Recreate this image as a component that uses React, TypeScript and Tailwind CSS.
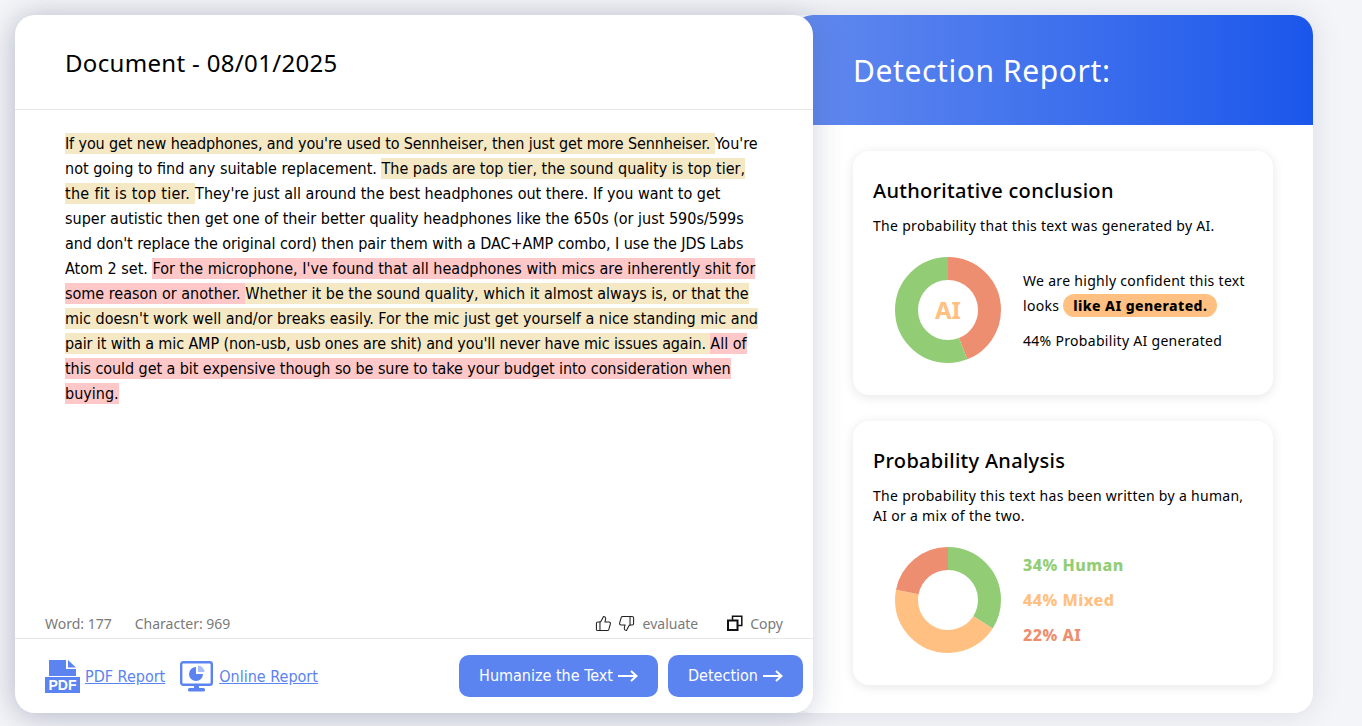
import { ThumbsDown, ThumbsUp } from "lucide-react";

const NOTO = "font-['Noto_Sans',sans-serif]";
const BODY = "font-['DejaVu_Sans',sans-serif] font-stretch-condensed";
const Y = "bg-[#f5e8c5] py-[1px]";
const R = "bg-[#ffc8c8] py-[1px]";

function Arrow() {
  return (
    <svg width="20" height="12" viewBox="0 0 20 12" fill="none" stroke="white" strokeWidth="2">
      <path d="M0 6h18.5M13 1l5.5 5-5.5 5" />
    </svg>
  );
}

function PdfIcon() {
  return (
    <svg width="35" height="33" viewBox="0 0 35 33">
      <path d="M4 0h17v9h10v7H4z" fill="#5b84f1" />
      <path d="M23 0l8 7.5h-8z" fill="#5b84f1" />
      <rect x="0" y="17" width="35" height="16" fill="#5b84f1" />
      <text x="17.5" y="30" textAnchor="middle" fill="white" fontSize="14" fontWeight="700" fontFamily="Liberation Sans, sans-serif">
        PDF
      </text>
    </svg>
  );
}

function ScreenIcon() {
  return (
    <svg width="33" height="31" viewBox="0 0 33 31">
      <rect x="1.2" y="1.2" width="30.6" height="22.6" rx="2" fill="none" stroke="#5b84f1" strokeWidth="2.4" />
      <path d="M16 6a7 7 0 1 0 7 7h-7z" fill="#5b84f1" />
      <path d="M18 4.5a7 7 0 0 1 6.5 6.5H18z" fill="#a9bef6" />
      <path d="M14 24h5v3h-5z" fill="#5b84f1" />
      <rect x="8" y="27" width="17" height="3.5" rx="1.5" fill="#5b84f1" />
    </svg>
  );
}

function CopyIcon() {
  return (
    <svg width="16" height="16" viewBox="0 0 16 16" fill="none" stroke="#111" strokeWidth="1.5">
      <rect x="1" y="5.5" width="9.5" height="9.5" strokeWidth="2" />
      <path d="M5.5 5V1.2h9.3v9.3H11" />
    </svg>
  );
}

function Donut({ parts }: { parts: { value: number; color: string }[] }) {
  const r = 41.5;
  const c = 2 * Math.PI * r;
  let offset = 0;
  return (
    <svg width="106" height="106" viewBox="0 0 106 106" className="shrink-0 -rotate-90">
      {parts.map((p) => {
        const dash = (p.value / 100) * c;
        const el = (
          <circle
            key={p.color}
            cx="53"
            cy="53"
            r={r}
            fill="none"
            stroke={p.color}
            strokeWidth="23"
            strokeDasharray={`${dash} ${c - dash}`}
            strokeDashoffset={-offset}
          />
        );
        offset += dash;
        return el;
      })}
    </svg>
  );
}

export default function App() {
  return (
    <div className="h-[726px] w-full overflow-hidden bg-[#f4f5f8] p-[15px]">
      <div className="flex h-[698px] w-[1298px] rounded-[20px] shadow-[0_0_30px_rgba(70,80,120,0.14)]">
        <div className="relative z-10 flex w-[798px] shrink-0 flex-col rounded-[20px] bg-white shadow-[0_4px_30px_rgba(70,80,120,0.26)]">
          <div className={`flex h-[95px] items-center border-b border-[#e5e7eb] px-[50px] pt-[2px] text-[24px] font-[450] tracking-[0.33px] text-black ${NOTO}`}>
            Document - 08/01/2025
          </div>
          <div className={`flex-1 pl-[50px] pr-[52px] pt-[21px] text-[16px] leading-[25px] text-black ${BODY}`}>
            <span className={`${Y} tracking-[-0.12px]`}>If you get new headphones, and you're used to Sennheiser, then just get more Sennheiser. </span>
            You're not going to find any suitable replacement.{" "}
            <span className={Y}>The pads are top tier, the sound quality is top tier, <span className="tracking-[0.3px]">the fit is top tier. </span></span>
            They're just all around the best headphones out there. If you want to get super autistic then get one of their better quality headphones like the 650s (or just 590s/599s <span className="tracking-[-0.07px]">and don't replace the original cord) then pair them with a DAC+AMP combo, I use the JDS Labs</span> Atom 2 set.{" "}
            <span className={R}>For the microphone, I've found that all headphones with mics are inherently shit for some reason or another. </span>
            <span className={Y}>Whether it be the sound quality, which it almost always is, or that the mic doesn't work well and/or breaks easily. For the mic just get yourself a nice standing mic and <span className="tracking-[-0.12px]">pair it with a mic AMP (non-usb, usb ones are shit) and you'll never have mic issues again. </span></span>
            <span className={R}>All of <span className="tracking-[-0.07px]">this could get a bit expensive though so be sure to take your budget into consideration when</span> buying.</span>
          </div>
          <div className={`flex h-[29px] items-center justify-between px-[30px] pb-[1px] text-[14px] text-[#7a7a7a] ${NOTO}`}>
            <div className="flex gap-[23px]">
              <span>Word: 177</span>
              <span>Character: 969</span>
            </div>
            <div className="flex items-center">
              <ThumbsUp size={17} strokeWidth={1.5} color="#222" />
              <ThumbsDown size={17} strokeWidth={1.5} color="#222" className="ml-[6px]" />
              <span className="ml-[8px]">evaluate</span>
              <span className="ml-[29px]"><CopyIcon /></span>
              <span className="ml-[7px]">Copy</span>
            </div>
          </div>
          <div className={`flex h-[75px] items-center justify-between border-t border-[#e5e7eb] pl-[30px] pr-[10px] text-[16px] ${BODY}`}>
            <div className="flex items-center text-[#5b84f1]">
              <PdfIcon />
              <span className="ml-[5px] mt-[1px] underline">PDF Report</span>
              <span className="ml-[15px]"><ScreenIcon /></span>
              <span className="ml-[6px] mt-[1px] underline">Online Report</span>
            </div>
            <div className="flex gap-[10px] text-white">
              <button className="flex h-[42px] w-[199px] items-center justify-center gap-[5px] rounded-[10px] bg-[#5b84f1]">
                Humanize the Text <Arrow />
              </button>
              <button className="flex h-[42px] w-[135px] items-center justify-center gap-[5px] rounded-[10px] bg-[#5b84f1]">
                Detection <Arrow />
              </button>
            </div>
          </div>
        </div>

        <div className={`-ml-[20px] flex w-[520px] shrink-0 flex-col rounded-[20px] bg-white ${NOTO}`}>
          <div className="flex h-[110px] shrink-0 items-center rounded-t-[20px] bg-gradient-to-r from-[#6289ee] to-[#1a56eb] pl-[60px] text-[30px] tracking-[0.6px] text-white">
            Detection Report:
          </div>
          <div className="flex flex-col gap-[26px] pl-[60px] pt-[26px]">
            <div className="h-[244px] w-[420px] rounded-[16px] bg-white px-[20px] pt-[26px] text-black shadow-[0_2px_12px_rgba(0,0,0,0.1)]">
              <h2 className="text-[20px] font-medium leading-[28px] tracking-[0.3px]">Authoritative conclusion</h2>
              <p className="mt-[10px] text-[14px] leading-[21px] tracking-[0.3px]">The probability that this text was generated by AI.</p>
              <div className="mt-[21px] flex items-center">
                <div className="relative ml-[22px] flex h-[106px] w-[106px] shrink-0 items-center justify-center">
                  <div className="absolute inset-0"><Donut parts={[{ value: 44, color: "#ee8e70" }, { value: 56, color: "#92cd76" }]} /></div>
                  <span className="relative text-[24px] font-bold text-[#ffc081]">AI</span>
                </div>
                <div className="ml-[22px] text-[14px] tracking-[0.3px]">
                  <p className="leading-[25px]">We are highly confident this text</p>
                  <p className="flex items-center leading-[25px]">
                    looks
                    <span className="ml-[4px] rounded-full bg-[#ffc081] px-[10px] font-extrabold leading-[23px] tracking-[0.42px]">like AI generated.</span>
                  </p>
                  <p className="mt-[10px] leading-[25px]">44% Probability AI generated</p>
                </div>
              </div>
            </div>
            <div className="h-[264px] w-[420px] rounded-[16px] bg-white px-[20px] pt-[26px] text-black shadow-[0_2px_12px_rgba(0,0,0,0.1)]">
              <h2 className="text-[20px] font-medium leading-[28px] tracking-[0.3px]">Probability Analysis</h2>
              <p className="mt-[11px] text-[14px] leading-[20px] tracking-[0.3px]">The probability this text has been written by a human, AI or a mix of the two.</p>
              <div className="mt-[21px] flex items-center">
                <div className="ml-[22px]">
                  <Donut parts={[{ value: 34, color: "#92cd76" }, { value: 44, color: "#ffc081" }, { value: 22, color: "#ee8e70" }]} />
                </div>
                <div className="ml-[22px] flex flex-col gap-[11px] text-[16px] font-extrabold leading-[24px] tracking-[0.5px]">
                  <span className="text-[#92cd76]">34% Human</span>
                  <span className="text-[#ffc081]">44% Mixed</span>
                  <span className="text-[#ee8e70]">22% AI</span>
                </div>
              </div>
            </div>
          </div>
        </div>
      </div>
    </div>
  );
}
